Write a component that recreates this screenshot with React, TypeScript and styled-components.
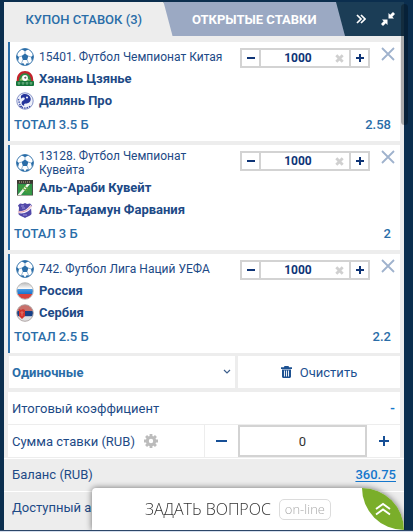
import React, { useState } from "react";
import styled, { createGlobalStyle } from "styled-components";

const GlobalStyle = createGlobalStyle`
  *, *::before, *::after { box-sizing: border-box; }
  html, body { margin: 0; padding: 0; }
  html { background: #d5deed; }
  body { background: #0b2e4e; font-family: Roboto, "Noto Sans", sans-serif; font-size: 13px; color: #1d4a86; overflow: hidden; }
  button, input, select { font: inherit; color: inherit; margin: 0; padding: 0; border: 0; background: none; border-radius: 0; outline: 0; }
  button { cursor: pointer; display: flex; align-items: center; justify-content: center; }
  svg { display: block; flex: none; }
`;

const Page = styled.div`
  height: calc(100vh - 1px);
  padding: 2px 9px 0 4px;
  border-bottom: 1px solid #2c4668;
  overflow: hidden;
`;

const Panel = styled.main`
  min-height: 100%;
  display: flex;
  flex-direction: column;
  background: #ededed;
`;

const Header = styled.div`
  display: flex;
  height: 34px;
  background: #1b3d56;
`;

const Tab = styled.button<{ $active?: boolean }>`
  flex: ${(p) => (p.$active ? "1 1 169px" : "1 1 182px")};
  margin-left: ${(p) => (p.$active ? "0" : "-9px")};
  padding-right: ${(p) => (p.$active ? "9px" : "0")};
  position: relative;
  z-index: ${(p) => (p.$active ? 1 : 0)};
  background: ${(p) => (p.$active ? "#ededed" : "#9ba9c3")};
  color: ${(p) => (p.$active ? "#2a6da8" : "#ffffff")};
  font-weight: ${(p) => (p.$active ? 500 : 700)};
  white-space: nowrap;
  clip-path: polygon(0 0, calc(100% - 9px) 0, 100% 100%, 0 100%);
`;

const Tools = styled.div`
  flex: 0 0 59px;
  display: flex;
  align-items: center;
  gap: 15px;
  padding-left: 11px;
  color: #fff;
`;

const Bets = styled.ul`
  list-style: none;
  margin: 0;
  padding: 6px 4px 3px;
  display: flex;
  flex-direction: column;
  gap: 4px;
`;

const Card = styled.li`
  background: #fff;
  border-left: 2px solid #2a6da8;
  padding: 4px 5px 3px 4px;
`;

const CardTop = styled.div`
  display: flex;
  align-items: flex-start;
`;

const Info = styled.div`
  flex: 1;
  min-width: 0;
  padding-right: 12px;
`;

const Line = styled.div`
  display: flex;
  align-items: center;
  min-height: 22px;
  padding-left: 2px;
  gap: 5px;
`;

const League = styled.span`
  font-size: 12px;
  line-height: 14px;
`;

const Team = styled.span`
  font-weight: 700;
  line-height: 22px;
  white-space: nowrap;
`;

const Stepper = styled.div`
  flex: none;
  display: flex;
  width: 130px;
  height: 20px;
  margin-top: 2px;
  border: 2px solid #d3d3d3;
  color: #0f3577;
`;

const StepButton = styled.button`
  flex: 0 0 17px;
`;

const StepField = styled.div`
  flex: 1;
  min-width: 0;
  display: flex;
  align-items: center;
  padding-right: 5px;
  border: solid #d3d3d3;
  border-width: 0 2px;
`;

const StepInput = styled.input`
  flex: 1;
  width: 0;
  height: 16px;
  text-align: center;
  font-size: 12px;
  font-weight: 700;
`;

const Close = styled.button`
  flex: none;
  width: 14px;
  height: 14px;
  margin: 1px 0 0 11px;
  color: #9fb2cd;
`;

const Outcome = styled.div`
  display: flex;
  justify-content: space-between;
  padding-right: 4px;
  line-height: 26px;
  font-weight: 500;
  color: #2a6da8;
`;

const Actions = styled.div`
  display: grid;
  grid-template-columns: 226px 1fr;
  gap: 3px;
  height: 32px;
  margin: 0 4px 4px 5px;
`;

const SelectBox = styled.div`
  display: grid;
  align-items: center;
  background: #fff;
  & > * { grid-area: 1 / 1; }
  & > svg { justify-self: end; margin-right: 4px; pointer-events: none; }
`;

const TypeSelect = styled.select`
  width: 100%;
  height: 32px;
  padding-left: 3px;
  appearance: none;
  font-weight: 700;
  color: #2a6da8;
`;

const Clear = styled.button`
  background: #fff;
  gap: 8px;
  color: #1d5191;
`;

const SummaryRow = styled.div`
  display: flex;
  align-items: center;
  justify-content: space-between;
  height: 32px;
  margin: 0 4px 1px;
  padding: 0 5px 0 4px;
  background: #fff;
`;

const StakeRow = styled.div`
  display: grid;
  grid-template-columns: 1fr 33px 129px 33px;
  height: 32px;
  margin: 0 4px 1px;
  background: #fff;
`;

const StakeLabel = styled.label`
  display: flex;
  align-items: center;
  gap: 9px;
  padding-left: 4px;
  border-right: 1px solid #ededed;
`;

const StakeInput = styled.input`
  width: 100%;
  height: 32px;
  border: 2px solid #d3d3d3;
  text-align: center;
  color: #333;
`;

const AccountRow = styled.div`
  display: flex;
  align-items: center;
  justify-content: space-between;
  height: 33px;
  padding: 0 8px 2px;
  border-top: 1px solid #fff;
`;

const Value = styled.span`
  font-weight: 700;
  color: #1577cc;
`;

const Balance = styled.a`
  font-weight: 500;
  color: #1577cc;
  text-decoration: underline;
  text-underline-offset: 2px;
`;

const Scrollbar = styled.div`
  position: fixed;
  top: 4px;
  right: 5px;
  width: 7px;
  height: 121px;
  border-radius: 4px;
  background: rgba(0, 0, 0, 0.28);
  z-index: 2;
`;

const Chat = styled.div`
  position: fixed;
  left: 92px;
  right: 9px;
  bottom: 2px;
  height: 42px;
  display: flex;
  align-items: center;
  padding-left: 53px;
  gap: 8px;
  background: #fff;
  border-radius: 4px 42px 0 0;
  box-shadow: 0 0 6px rgba(0, 0, 0, 0.55);
  font-family: "Open Sans", "Noto Sans", sans-serif;
  clip-path: inset(-8px -1px 0 -8px);
`;

const Ask = styled.button`
  font-family: "Open Sans", sans-serif;
  font-size: 16px;
  font-weight: 300;
  color: #333;
  white-space: nowrap;
`;

const Status = styled.span`
  width: 52px;
  height: 21px;
  border: 1px solid #dcdcdc;
  border-radius: 5px;
  text-align: center;
  line-height: 18px;
  font-weight: 300;
  color: #aaa;
`;

const Expand = styled.button`
  margin-left: auto;
  width: 42px;
  height: 42px;
  background: #7aae2a;
  border-radius: 0 42px 0 42px;
  color: #fff;
`;

const BallIcon = () => (
  <svg width="18" height="18" viewBox="0 0 18 18" aria-hidden="true">
    <circle cx="9" cy="9" r="8.4" fill="#fff" stroke="#2a6da8" strokeWidth="0.9" />
    <g fill="#2a6da8">
      <path d="M9 5.500l3.400 2.500-1.300 4H6.900L5.600 8z" />
      <path d="M5.500 1.200L9 3.200l3.500-2C10.200.2 7.800.2 5.500 1.200zM.6 7l2.400 2-.8 4C.8 11.500.3 9.300.6 7zM17.400 7L15 9l.8 4c1.400-1.500 1.900-3.700 1.600-6zM4 15.500l3.500-.3 1 2.300c-1.700 0-3.200-.7-4.500-2zM14 15.500l-3.500-.3-1 2.300c1.700 0 3.200-.7 4.500-2z" />
    </g>
    <path d="M9 5.700v-3M12.200 8l3 1M11 11.700l1.500 3.500M7 11.700l-1.500 3.500M5.800 8l-3 1" stroke="#2a6da8" fill="none" strokeWidth="0.5" />
  </svg>
);

const HenanIcon = () => (
  <svg width="18" height="18" viewBox="0 0 18 18" aria-hidden="true">
    <path d="M.8 9.500C1 4 4.500 1 9 1s8 3 8.200 8.500l.6 5.500H.2z" fill="#c3232c" />
    <path d="M2.800 11c0-4.700 2.700-7.700 6.200-7.700s6.200 3 6.200 7.700z" fill="#2d8a45" />
    <path d="M3.500 10.500L7 5.500l7.500 5z" fill="#9bc66b" />
    <circle cx="9" cy="8" r="2.900" fill="#fff" />
    <path d="M8 7.200l2-.6.500 1.500L9 9z" fill="#666" />
    <rect x="0" y="11" width="18" height="5" rx="1" fill="#15753a" />
    <path d="M1.500 13h3M5.500 13h3M9.500 13h3M13.500 13h3M3 12v3M7 12v3M11 12v3M15 12v3" stroke="#8fc49d" strokeWidth="0.7" />
  </svg>
);

const DalianIcon = () => (
  <svg width="18" height="18" viewBox="0 0 18 18" aria-hidden="true">
    <circle cx="9" cy="9" r="8.200" fill="#eef1fa" stroke="#8793c8" strokeWidth="1" />
    <path d="M5.500 3.300C8 .9 13.500 2 14.600 6c.8 3.500-2 5.600-4.800 5.500-2 0-2.200 1.500-1.300 2.500C5 13 4.800 9.600 7.300 8.400 9 7.600 9.300 6 8 5.500c-1-.3-2 .3-2.500 1.200-.8-1-.9-2.400 0-3.400z" fill="#25359b" />
    <circle cx="11" cy="5.500" r="1" fill="#fff" />
    <path d="M2.500 7l1 5 3 3.500M3.500 14c3.500 2.700 7.500 2.700 11 0" fill="none" stroke="#3c4ca7" strokeWidth="1.300" strokeDasharray="1.500 1" />
  </svg>
);

const ArabiIcon = () => (
  <svg width="18" height="18" viewBox="0 0 18 18" aria-hidden="true">
    <rect x="1" y="1" width="16" height="16" fill="#4a5148" />
    <rect x="2" y="5" width="14" height="11" fill="#2f9448" />
    <path d="M1 1h16v3.500H1z" fill="#3b3a32" />
    <path d="M3 3h12" stroke="#c2b68c" strokeDasharray="1 1" />
    <path d="M2 15.500L11 5h3L5 16H2z" fill="#f4f8ec" />
    <path d="M3 6h5l-4 5zM8 14l6-7 1 8z" fill="#3f9c41" />
    <path d="M6 9l5 3M8 7l4 3" stroke="#69a53c" strokeWidth="1.200" />
    <path d="M1 16.500h16" stroke="#a5a59a" />
  </svg>
);

const TadamunIcon = () => (
  <svg width="18" height="18" viewBox="0 0 18 18" aria-hidden="true">
    <path d="M2 4.500L4 2.500l3 .5 2-1 2 1 3-.5 2 2-1 2 .5 6c0 2-3 2.500-6.500 4.500-3.500-2-6.500-2.500-6.500-4.500L3 6.500z" fill="#5148a8" />
    <path d="M1.500 10c5 1 9-1 13-6l2 1.500c-3 5-8 8-14.500 6.500z" fill="#f3effa" />
    <path d="M2 11c6 .5 10-2 13.500-6" fill="none" stroke="#e0808c" strokeWidth="0.8" />
    <path d="M5 5h3M6 7h3M7 14h4" stroke="#9c95dc" strokeWidth="1" />
  </svg>
);

const RussiaIcon = () => (
  <svg width="18" height="18" viewBox="0 0 18 18" aria-hidden="true">
    <defs>
      <clipPath id="ru"><circle cx="9" cy="9" r="8" /></clipPath>
      <linearGradient id="ruWhite" x2="0" y2="1"><stop stopColor="#b4b4b4" /><stop offset="1" stopColor="#fff" /></linearGradient>
      <linearGradient id="ruBlue" x2="0" y2="1"><stop stopColor="#4d9be0" /><stop offset="1" stopColor="#1674cf" /></linearGradient>
    </defs>
    <g clipPath="url(#ru)">
      <path d="M0 0h18v7H0z" fill="url(#ruWhite)" />
      <path d="M0 7h18v5H0z" fill="url(#ruBlue)" />
      <path d="M0 12h18v6H0z" fill="#d9433f" />
    </g>
    <circle cx="9" cy="9" r="8.300" fill="none" stroke="#aaa" strokeWidth="0.800" />
  </svg>
);

const SerbiaIcon = () => (
  <svg width="18" height="18" viewBox="0 0 18 18" aria-hidden="true">
    <defs><clipPath id="rs"><circle cx="9" cy="9" r="8.200" /></clipPath></defs>
    <g clipPath="url(#rs)">
      <path d="M0 0h18v7H0z" fill="#c8716c" />
      <path d="M0 7h18v5.500H0z" fill="#164087" />
      <path d="M0 12.500h18V18H0z" fill="#e0e0e0" />
      <path d="M3 5l2 1 2-1 2 1v6l-3 3-3-3z" fill="#d3352f" />
      <path d="M4.500 8l1.500 1.500L7.500 8M6 7v5" stroke="#e58d80" fill="none" strokeWidth="0.700" />
    </g>
    <circle cx="9" cy="9" r="8.300" fill="none" stroke="#a99e9e" strokeWidth="0.900" />
  </svg>
);

const MinusIcon = () => (
  <svg width="8" height="8" viewBox="0 0 8 8" aria-hidden="true"><path d="M0 4h8" stroke="currentColor" strokeWidth="2" /></svg>
);
const PlusIcon = () => (
  <svg width="8" height="8" viewBox="0 0 8 8" aria-hidden="true"><path d="M0 4h8M4 0v8" stroke="currentColor" strokeWidth="2" /></svg>
);
const EraseIcon = () => (
  <svg width="9" height="9" viewBox="0 0 9 9" aria-hidden="true"><path d="M1.300 1.300l6.400 6.400M7.700 1.300L1.300 7.700" stroke="#d0d0d0" strokeWidth="2.800" /></svg>
);
const CloseIcon = () => (
  <svg width="14" height="14" viewBox="0 0 14 14" aria-hidden="true"><path d="M1 1l12 12M13 1L1 13" stroke="currentColor" strokeWidth="1.800" /></svg>
);
const ForwardIcon = () => (
  <svg width="10" height="10" viewBox="0 0 10 10" aria-hidden="true"><path d="M1 1l4 4-4 4M5 1l4 4-4 4" fill="none" stroke="currentColor" strokeWidth="1.700" /></svg>
);
const CollapseIcon = () => (
  <svg width="14" height="14" viewBox="0 0 14 14" aria-hidden="true">
    <path d="M7.500 6.500V1l1.700 1.700L12 0l2 2-2.700 2.800L13 6.500zM6.500 7.500V13l-1.700-1.700L2 14l-2-2 2.700-2.800L1 7.500z" fill="currentColor" />
  </svg>
);
const ChevronIcon = () => (
  <svg width="8" height="6" viewBox="0 0 8 6" aria-hidden="true"><path d="M1 1l3 3 3-3" fill="none" stroke="#3d5f8c" strokeWidth="1.200" /></svg>
);
const TrashIcon = () => (
  <svg width="11" height="12" viewBox="0 0 11 12" aria-hidden="true">
    <path d="M3.500 0h4l.6 1.200H11V3H0V1.200h2.900zM1 3.500h9v7c0 .8-.7 1.500-1.500 1.500h-6C1.700 12 1 11.300 1 10.500z" fill="currentColor" />
    <path d="M3.500 4.500v6M5.500 4.500v6M7.500 4.500v6" stroke="#fff" strokeWidth="0.900" />
  </svg>
);
const GearIcon = () => (
  <svg width="14" height="14" viewBox="0 0 14 14" aria-hidden="true">
    <circle cx="7" cy="7" r="3.700" fill="none" stroke="#bcbcbc" strokeWidth="3" />
    <path d="M7 0v2.500M7 11.500V14M0 7h2.500M11.500 7H14M2.050 2.050l1.800 1.800M10.150 10.150l1.800 1.800M2.050 11.950l1.800-1.800M10.150 3.850l1.800-1.800" stroke="#bcbcbc" strokeWidth="2.800" />
  </svg>
);
const BigMinus = () => (
  <svg width="11" height="12" viewBox="0 0 11 12" aria-hidden="true"><path d="M0 6h11" stroke="#164f96" strokeWidth="2" /></svg>
);
const BigPlus = () => (
  <svg width="10" height="10" viewBox="0 0 10 10" aria-hidden="true"><path d="M0 5h10M5 0v10" stroke="#164f96" strokeWidth="2" /></svg>
);
const UpIcon = () => (
  <svg width="16" height="14" viewBox="0 0 16 14" aria-hidden="true"><path d="M1 7l7-5 7 5M1 12.500l7-5 7 5" fill="none" stroke="currentColor" strokeWidth="1.900" /></svg>
);

type Bet = {
  league: string;
  teams: { name: string; Icon: () => React.JSX.Element }[];
  outcome: string;
  odds: string;
};

const bets: Bet[] = [
  { league: "15401. Футбол Чемпионат Китая", teams: [{ name: "Хэнань Цзянье", Icon: HenanIcon }, { name: "Далянь Про", Icon: DalianIcon }], outcome: "ТОТАЛ 3.5 Б", odds: "2.58" },
  { league: "13128. Футбол Чемпионат Кувейта", teams: [{ name: "Аль-Араби Кувейт", Icon: ArabiIcon }, { name: "Аль-Тадамун Фарвания", Icon: TadamunIcon }], outcome: "ТОТАЛ 3 Б", odds: "2" },
  { league: "742. Футбол Лига Наций УЕФА", teams: [{ name: "Россия", Icon: RussiaIcon }, { name: "Сербия", Icon: SerbiaIcon }], outcome: "ТОТАЛ 2.5 Б", odds: "2.2" },
];

function BetCard({ bet }: { bet: Bet }) {
  const [stake, setStake] = useState("1000");
  const step = (d: number) => setStake(String(Math.max(0, Number(stake) + d)));
  return (
    <Card>
      <CardTop>
        <Info>
          <Line><BallIcon /><League>{bet.league}</League></Line>
          {bet.teams.map(({ name, Icon }) => (
            <Line key={name}><Icon /><Team>{name}</Team></Line>
          ))}
        </Info>
        <Stepper>
          <StepButton aria-label="Уменьшить" onClick={() => step(-100)}><MinusIcon /></StepButton>
          <StepField>
            <StepInput aria-label="Ставка" value={stake} onChange={(e) => setStake(e.target.value)} />
            <button aria-label="Стереть" onClick={() => setStake("")}><EraseIcon /></button>
          </StepField>
          <StepButton aria-label="Увеличить" onClick={() => step(100)}><PlusIcon /></StepButton>
        </Stepper>
        <Close aria-label="Удалить"><CloseIcon /></Close>
      </CardTop>
      <Outcome><span>{bet.outcome}</span><span>{bet.odds}</span></Outcome>
    </Card>
  );
}

export default function App() {
  const [sum, setSum] = useState("0");
  return (
    <>
      <GlobalStyle />
      <Page>
        <Panel>
          <Header>
            <Tab $active>КУПОН СТАВОК (3)</Tab>
            <Tab>ОТКРЫТЫЕ СТАВКИ</Tab>
            <Tools>
              <button aria-label="Вперёд"><ForwardIcon /></button>
              <button aria-label="Свернуть"><CollapseIcon /></button>
            </Tools>
          </Header>
          <Bets>{bets.map((bet) => <BetCard key={bet.league} bet={bet} />)}</Bets>
          <Actions>
            <SelectBox>
              <TypeSelect aria-label="Тип ставки"><option>Одиночные</option></TypeSelect>
              <ChevronIcon />
            </SelectBox>
            <Clear><TrashIcon />Очистить</Clear>
          </Actions>
          <SummaryRow><span>Итоговый коэффициент</span><Value>-</Value></SummaryRow>
          <StakeRow>
            <StakeLabel htmlFor="sum">Сумма ставки (RUB)<GearIcon /></StakeLabel>
            <button aria-label="Меньше" onClick={() => setSum(String(Math.max(0, Number(sum) - 1)))}><BigMinus /></button>
            <StakeInput id="sum" value={sum} onChange={(e) => setSum(e.target.value)} />
            <button aria-label="Больше" onClick={() => setSum(String(Number(sum) + 1))}><BigPlus /></button>
          </StakeRow>
          <AccountRow><span>Баланс (RUB)</span><Balance href="#balance">360.75</Balance></AccountRow>
          <AccountRow><span>Доступный а</span></AccountRow>
        </Panel>
      </Page>
      <Scrollbar />
      <Chat>
        <Ask>ЗАДАТЬ ВОПРОС</Ask>
        <Status>on-line</Status>
        <Expand aria-label="Развернуть"><UpIcon /></Expand>
      </Chat>
    </>
  );
}
